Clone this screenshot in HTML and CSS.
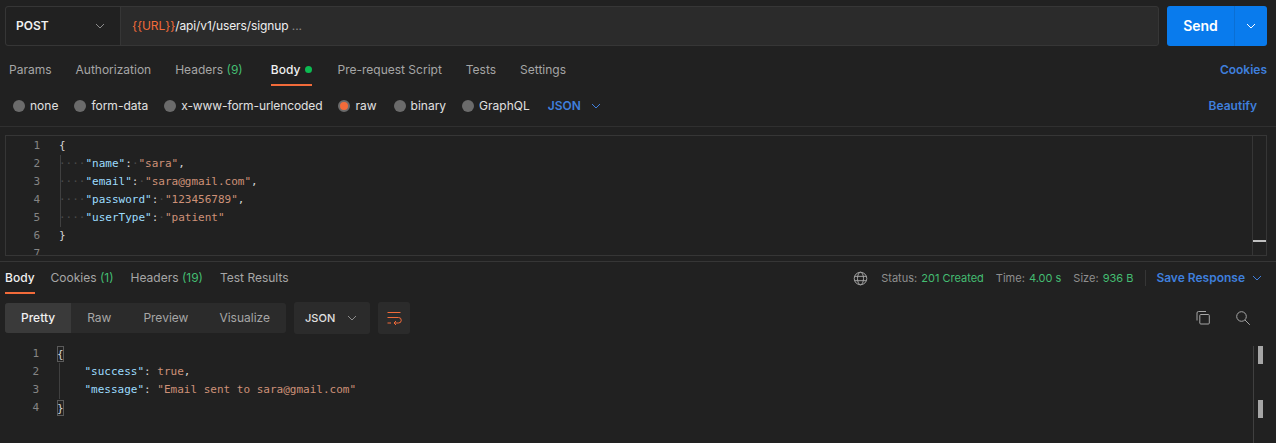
FILE: index.html
```html
<!DOCTYPE html>
<html lang="en">
<head>
<meta charset="utf-8">
<title>POST signup</title>
<link rel="stylesheet" href="styles.css">
</head>
<body>
<div class="url-row">
  <div class="url-box">
    <div class="method"><b>POST</b><svg class="chev" viewBox="0 0 12 12"><path d="M2 4l4 4 4-4"/></svg></div>
    <div class="url"><span class="var">{{URL}}</span>/api/v1/users/signup <span class="dim">...</span></div>
  </div>
  <div class="send"><span class="send-label">Send</span><span class="send-more"><svg class="chev white" viewBox="0 0 12 12"><path d="M2 4l4 4 4-4"/></svg></span></div>
</div>

<div class="tabs req-tabs">
  <span class="tab">Params</span>
  <span class="tab">Authorization</span>
  <span class="tab">Headers <em>(9)</em></span>
  <span class="tab active">Body <i class="dot"></i></span>
  <span class="tab">Pre-request Script</span>
  <span class="tab">Tests</span>
  <span class="tab">Settings</span>
  <span class="link push">Cookies</span>
</div>

<div class="radios">
  <span class="radio"><i></i>none</span>
  <span class="radio"><i></i>form-data</span>
  <span class="radio narrow"><i></i>x-www-form-urlencoded</span>
  <span class="radio on"><i></i>raw</span>
  <span class="radio"><i></i>binary</span>
  <span class="radio"><i></i>GraphQL</span>
  <span class="link json">JSON<svg class="chev blue" viewBox="0 0 12 12"><path d="M2 4l4 4 4-4"/></svg></span>
  <span class="link push beautify">Beautify</span>
</div>

<div class="editor">
  <div class="code req-code">
    <div class="guide"></div>
    <div class="line"><span class="n">1</span><span class="p">{</span></div>
    <div class="line"><span class="n">2</span><span class="ws">····</span><span class="k">"name"</span><span class="p">:</span><span class="ws">·</span><span class="s">"sara"</span><span class="p">,</span></div>
    <div class="line"><span class="n">3</span><span class="ws">····</span><span class="k">"email"</span><span class="p">:</span><span class="ws">·</span><span class="s">"sara@gmail.com"</span><span class="p">,</span></div>
    <div class="line"><span class="n">4</span><span class="ws">····</span><span class="k">"password"</span><span class="p">:</span><span class="ws">·</span><span class="s">"123456789"</span><span class="p">,</span></div>
    <div class="line"><span class="n">5</span><span class="ws">····</span><span class="k">"userType"</span><span class="p">:</span><span class="ws">·</span><span class="s">"patient"</span></div>
    <div class="line"><span class="n">6</span><span class="p">}</span></div>
    <div class="line"><span class="n">7</span></div>
  </div>
  <div class="req-scroll"><i></i></div>
</div>

<div class="tabs res-tabs">
  <span class="tab active">Body</span>
  <span class="tab">Cookies <em>(1)</em></span>
  <span class="tab">Headers <em>(19)</em></span>
  <span class="tab">Test Results</span>
  <div class="status push">
    <svg class="globe" viewBox="0 0 16 16"><circle cx="8" cy="8" r="6.7"/><ellipse cx="8" cy="8" rx="3.2" ry="6.7"/><path d="M1.6 5.7h12.8M1.600 10.300h12.800"/></svg>
    <span>Status: <em>201 Created</em></span>
    <span>Time: <em>4.00 s</em></span>
    <span>Size: <em>936 B</em></span>
    <span class="sep"></span>
    <span class="link">Save Response<svg class="chev blue" viewBox="0 0 12 12"><path d="M2 4l4 4 4-4"/></svg></span>
  </div>
</div>

<div class="controls">
  <div class="seg"><span class="seg-on">Pretty</span><span>Raw</span><span>Preview</span><span class="seg-last">Visualize</span></div>
  <div class="fmt"><b>JSON</b><svg class="chev" viewBox="0 0 12 12"><path d="M2 4l4 4 4-4"/></svg></div>
  <div class="wrap"><svg viewBox="0 0 16 16"><path d="M1.500 2.500h13M1.500 7.500h11a2 2 0 0 1 0 5.500H8M10 11l-2 2 2 2M1.500 13H5"/></svg></div>
  <div class="tools push">
    <svg viewBox="0 0 16 16"><path d="M2 10.500V3a1.500 1.500 0 0 1 1.500-1.500H11"/><rect x="4.800" y="4.500" width="9.500" height="9.500" rx="1"/></svg>
    <svg viewBox="0 0 16 16"><circle cx="6.500" cy="6.500" r="4.800"/><path d="M10 10l4.800 4.800"/></svg>
  </div>
</div>

<div class="response">
  <div class="code res-code">
    <div class="guide"></div>
    <div class="line"><span class="n">1</span><span class="p match">{</span></div>
    <div class="line"><span class="n">2</span><span class="sp">    </span><span class="k">"success"</span><span class="p">: </span><span class="s">true</span><span class="p">,</span></div>
    <div class="line"><span class="n">3</span><span class="sp">    </span><span class="k">"message"</span><span class="p">: </span><span class="s">"Email sent to sara@gmail.com"</span></div>
    <div class="line"><span class="n">4</span><span class="p match">}</span></div>
  </div>
  <div class="res-scroll"><i></i><i></i></div>
</div>
</body>
</html>
```
FILE: styles.css
```css
* { box-sizing: border-box; }
html, body { margin: 0; height: 443px; overflow: hidden; }
body {
  background: #212121;
  color: #a6a6a6;
  font: 12px/18px Inter, "Liberation Sans", sans-serif;
  padding-top: 6px;
}
em { font-style: normal; color: #44bd72; }
.push { margin-left: auto; }
.link { color: #3f7fdc; font-weight: 600; }

.chev { width: 12px; height: 12px; fill: none; stroke: #8c8c8c; stroke-width: 1; }
.chev.white { stroke: #fff; }
.chev.blue { stroke: #3f7fdc; }

.url-row { display: flex; gap: 8px; height: 40px; padding: 0 9px 0 5px; }
.url-box { flex: 1; display: flex; background: #2b2b2b; border: 1px solid #363636; border-radius: 3px; }
.method { width: 115px; display: flex; align-items: center; justify-content: space-between; padding: 0 14px 0 10px; background: #212121; border-right: 1px solid #363636; border-radius: 3px 0 0 3px; color: #f0f0f0; }
.method b { font-weight: 600; }
.url { flex: 1; display: flex; align-items: center; padding-left: 11px; color: #f0f0f0; white-space: pre; letter-spacing: -.1px; }
.var { color: #f26b3a; }
.dim { color: #8c8c8c; }

.send { width: 100px; display: flex; background: #097bed; border-radius: 3px; color: #fff; }
.send-label { flex: 1; display: flex; align-items: center; justify-content: center; font-size: 14px; font-weight: 600; }
.send-more { width: 33px; display: flex; align-items: center; justify-content: center; border-left: 1px solid #0a6fd4; }

.tabs { display: flex; align-items: stretch; }
.tab { display: flex; align-items: center; white-space: pre; }
.tab.active { color: #f0f0f0; box-shadow: inset 0 -2px 0 #f26b3a; font-weight: 500; }
.dot { width: 7px; height: 7px; border-radius: 50%; background: #0cbb52; margin-left: 2px; }

.req-tabs { height: 39px; margin-top: 1px; padding: 6px 9px 0 9px; gap: 24px; }
.req-tabs .tab { height: 33px; }
.req-tabs .tab.active { margin-left: 4px; margin-right: 1px; }
.req-tabs > .link { align-self: center; }

.radios { height: 41px; display: flex; align-items: center; gap: 16px; padding: 0 19px 0 13px; border-bottom: 1px solid #303030; color: #e0e0e0; }
.radio { display: flex; align-items: center; gap: 5px; }
.radio i { width: 12px; height: 12px; border-radius: 50%; background: #6b6b6b; }
.radio.narrow { letter-spacing: -.1px; }
.radio.on { margin-right: 1px; }
.radio.on i { background: #f26b3a; border: 2px solid #6b6b6b; }
.json { display: flex; align-items: center; gap: 9px; margin-left: 2px; }
.beautify { margin-left: auto; }

.editor { height: 121px; margin: 8px 9px 0 5px; border-top: 1px solid #363636; border-bottom: 1px solid #363636; border-left: 1px solid #363636; display: flex; overflow: hidden; }
.code { position: relative; flex: 1; padding-top: 1px; font: 11px/18px "DejaVu Sans Mono", "Liberation Mono", monospace; color: #d4d4d4; }
.line { display: flex; height: 18px; white-space: pre; }
.n { width: 34px; text-align: right; margin-right: 19px; color: #858585; flex: none; }
.k { color: #9cdcfe; }
.s { color: #ce9178; }
.ws { color: #4a4a4a; }
.p { color: #d4d4d4; }
.guide { position: absolute; width: 1px; background: #404040; }
.req-code .guide { left: 54px; top: 19px; height: 72px; }
.req-scroll { width: 15px; border-left: 1px solid #363636; border-right: 1px solid #363636; position: relative; }
.req-scroll i { position: absolute; left: 0; right: 0; top: 104px; height: 2px; background: #c0c0c0; }

.res-tabs { height: 33px; margin-top: 5px; border-top: 1px solid #363636; padding: 0 13px 0 5px; gap: 16px; }
.res-tabs .tab { height: 32px; }
.res-tabs .tab.active { margin-right: -1px; }
.res-tabs .tab:nth-child(2) { margin-left: 1px; }
.res-tabs .tab:nth-child(3) { margin-left: 1px; }
.res-tabs .tab:nth-child(4) { margin-left: 1px; }
.status { display: flex; align-items: center; gap: 12px; font-size: 11px; color: #8f8f8f; }
.status .link { font-size: 12px; display: flex; align-items: center; gap: 6px; }
.status em { margin-left: 1px; }
.globe { width: 15px; height: 15px; fill: none; stroke: #a6a6a6; stroke-width: 1; margin-right: 1px; }
.sep { width: 1px; height: 16px; background: #363636; margin-right: -2px; }

.controls { display: flex; align-items: center; height: 32px; margin-top: 8px; padding: 0 25px 0 5px; gap: 8px; }
.seg { display: flex; height: 30px; background: #2b2b2b; border-radius: 3px; }
.seg span { display: flex; align-items: center; padding: 0 16px; }
.seg .seg-on { background: #3a3a3a; color: #f0f0f0; border-radius: 3px 0 0 3px; font-weight: 500; }
.seg .seg-last { padding-left: 15px; }
.fmt { width: 76px; height: 32px; display: flex; align-items: center; justify-content: space-between; padding: 0 12px 0 11px; background: #2b2b2b; border-radius: 3px; font-size: 11px; color: #e0e0e0; }
.fmt b { font-weight: 500; }
.wrap { width: 32px; height: 32px; background: #2b2b2b; border-radius: 3px; display: flex; align-items: center; justify-content: center; }
.wrap svg { width: 16px; height: 16px; fill: none; stroke: #f26b3a; stroke-width: 1; }
.tools { display: flex; gap: 24px; }
.tools svg { width: 16px; height: 16px; fill: none; stroke: #a6a6a6; stroke-width: 1; }

.response { display: flex; margin-top: 10px; height: 102px; padding: 0 8px 0 5px; }
.response .n { width: 34px; }
.res-code .guide { left: 54px; top: 19px; height: 36px; }
.match { display: block; width: 7px; height: 16px; line-height: 15px; margin-top: 1px; border: 1px solid #5a5a5a; text-indent: -1px; margin-left: -1px; }
.res-scroll { width: 15px; margin-top: 2px; border-left: 1px solid #404040; padding: 0 4px; display: flex; flex-direction: column; gap: 36px; }
.res-scroll i { width: 5px; height: 18px; background: #a6a6a6; flex: none; }
```
